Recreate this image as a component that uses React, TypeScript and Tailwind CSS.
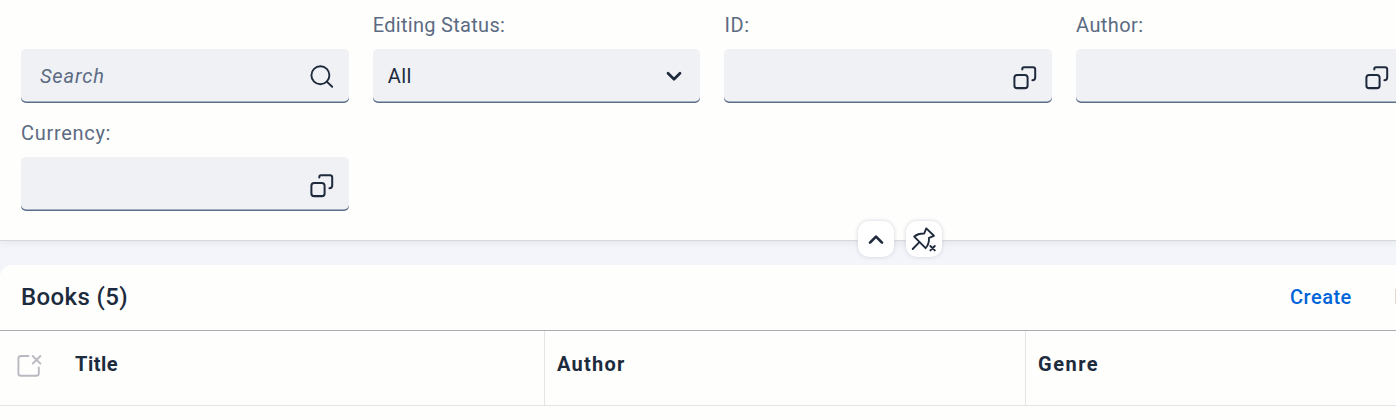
import type { ReactNode } from 'react';

function SearchIcon() {
  return (
    <svg width="24" height="24" viewBox="0 0 24 24" fill="none" stroke="#1f2a3c" strokeWidth="1.9" strokeLinecap="round">
      <circle cx="10.4" cy="10.2" r="9" />
      <path d="M16.8 16.6 22.2 21.8" />
    </svg>
  );
}

function ValueHelpIcon() {
  return (
    <svg width="24" height="24" viewBox="0 0 24 24" fill="none" stroke="#1f2a3c" strokeWidth="2" strokeLinecap="round">
      <rect x="1.4" y="9" width="13.2" height="13.2" rx="2.8" />
      <path d="M2.6 21.8H13.4" strokeWidth="1.6" />
      <path d="M9.3 3.6V3Q9.3 1.2 11 1.2H20Q22.2 1.2 22.2 3.4V11.5Q22.2 14.2 19.4 14.2" />
    </svg>
  );
}

function Chevron({ up = false }: { up?: boolean }) {
  return (
    <svg width="16" height="12" viewBox="0 0 16 12" fill="none" stroke="#1f2a3c" strokeWidth="2.7" strokeLinecap="round" strokeLinejoin="round">
      <path d={up ? 'M2 9.6 8 3.6 14 9.6' : 'M2 3.3 8 9.3 14 3.3'} />
    </svg>
  );
}

function UnpinIcon() {
  return (
    <svg width="26" height="26" viewBox="0 0 26 26" fill="none" stroke="#1f2a3c" strokeWidth="1.9" strokeLinecap="round" strokeLinejoin="round">
      <path d="M15.3 2.4 22.9 9.8 18 11.9C18.2 16.4 17.3 19.2 14.6 22.2L3.2 10.6C6 8.3 9.2 7.4 13.2 7.5Z" />
      <path d="M8.4 16.2 1.7 23" />
      <path d="M19.4 20 23.8 24.4M23.8 20 19.4 24.4" strokeWidth="1.9" />
    </svg>
  );
}

function ClearSelectionIcon() {
  return (
    <svg width="26" height="26" viewBox="0 0 26 26" fill="none" stroke="#b9bac1" strokeWidth="1.9" strokeLinecap="round">
      <path d="M11.5 3H4Q1.4 3 1.4 5.6V20.2Q1.4 22.8 4 22.8H19.2Q21.8 22.8 21.8 20.2V14.5" />
      <path d="M15.7 3 23.4 10.7M23.4 3 15.7 10.7" />
    </svg>
  );
}

function Field({ label, children }: { label?: ReactNode; children: ReactNode }) {
  return (
    <div className="w-[327.7px]">
      <div className="-mt-px h-9 text-[20px] leading-6 text-[#5b6b82]">{label}</div>
      <div className="flex h-[53.5px] items-center justify-between overflow-hidden rounded-[5px] bg-[#eff1f5] pr-[14.7px] shadow-[inset_0_-1.5px_0_#5b6f89]">
        {children}
      </div>
    </div>
  );
}

function HelpField({ label }: { label: ReactNode }) {
  return (
    <Field label={label}>
      <input className="h-full w-60 bg-transparent outline-none" />
      <span className="pt-[5px]"><ValueHelpIcon /></span>
    </Field>
  );
}

export default function App() {
  return (
    <div className="h-[420px] w-[1396px] overflow-hidden bg-[#f4f5fb] font-['Roboto',sans-serif] text-[#1d2b3e]">
      <header className="relative h-[240px] bg-[#fefefd] pt-[14px] pl-[21px] shadow-[0_1px_0_#d5d7da,0_3px_7px_#e2e6e8]">
        <div className="grid w-[1400px] grid-cols-[repeat(4,327.7px)] gap-x-[24px] gap-y-[19.5px]">
          <Field>
            <span className="pl-[19px] text-[20px] tracking-[0.85px] text-[#5b6b82] italic">Search</span>
            <span className="pt-[2px]"><SearchIcon /></span>
          </Field>
          <Field label={<span className="tracking-[0.3px]">Editing Status:</span>}>
            <span className="pl-[15px] text-[20px] tracking-[0.5px]">All</span>
            <span className="pr-[4px]"><Chevron /></span>
          </Field>
          <HelpField label={<span className="tracking-[0.7px]">ID:</span>} />
          <HelpField label={<span className="tracking-[0.4px]">Author:</span>} />
          <HelpField label={<span className="tracking-[0.7px]">Currency:</span>} />
        </div>
        <div className="absolute top-[221px] left-[858px] z-10 flex gap-3">
          <button className="flex size-9 items-center justify-center rounded-[11px] bg-white shadow-[0_0_4px_#cdd2da]"><Chevron up /></button>
          <button className="flex size-9 items-center justify-center rounded-[11px] bg-white shadow-[0_0_4px_#cdd2da]"><UnpinIcon /></button>
        </div>
      </header>
      <main className="mt-[25px] h-[155px] rounded-tl-[12px] bg-[#fefefd]">
        <div className="flex h-[66px] w-[1460px] items-center border-b border-[#a9abb3] pb-0.5 pl-[21px]">
          <h1 className="w-[1269px] text-[24px] leading-8 font-medium tracking-[0.4px]">Books (5)</h1>
          <button className="w-[104px] text-left text-[20px] font-medium tracking-[0.5px] text-[#0064d9]">Create</button>
          <button className="text-[20px] font-medium text-[#b5bccb]">Delete</button>
        </div>
        <div className="flex h-[75px] w-[1500px] border-b border-[#e3e4e6] text-[20px] leading-6 font-bold">
          <div className="flex w-[75px] pt-[22px] pl-[17px]"><ClearSelectionIcon /></div>
          <div className="w-[470px] border-r border-[#e3e4e6] pt-[21px] tracking-[0.5px]">Title</div>
          <div className="w-[481px] border-r border-[#e3e4e6] pt-[21px] pl-3 tracking-[1.25px]">Author</div>
          <div className="flex-1 pt-[21px] pl-3 tracking-[1.5px]">Genre</div>
        </div>
      </main>
    </div>
  );
}
